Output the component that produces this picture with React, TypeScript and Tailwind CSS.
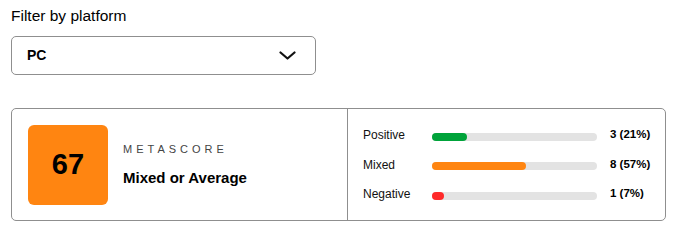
import { ChevronDown } from "lucide-react";

const rows = [
  { label: "Positive", count: 3, pct: 21, color: "bg-[#00a33a]" },
  { label: "Mixed", count: 8, pct: 57, color: "bg-[#ff8511]" },
  { label: "Negative", count: 1, pct: 7, color: "bg-[#ff2a2a]" },
];

export default function App() {
  return (
    <div className="w-[679px] h-[248px] bg-white px-[11px] pt-[7px] text-black font-['Liberation_Sans',Arial,sans-serif]">
      <div className="text-[15.5px] leading-[18px]">Filter by platform</div>

      <button className="mt-[11px] flex h-[39px] w-[305px] items-center justify-between rounded-[5px] border border-[#8f8f8f] pl-[15px] pr-[19px]">
        <span className="text-[14px] font-semibold">PC</span>
        <svg width="17" height="9" viewBox="0 0 17 9" fill="none">
          <path d="M1.5 1.5 L8.5 7.5 L15.5 1.5" stroke="#111" strokeWidth="2.2" strokeLinecap="round" strokeLinejoin="round" />
        </svg>
      </button>

      <div className="mt-[33px] flex h-[113px] w-[655px] rounded-[5px] border border-[#8f8f8f]">
        <div className="flex w-[336px] items-center gap-[15px] border-r border-[#8f8f8f] p-4">
          <div className="flex h-[80px] w-[80px] items-center justify-center rounded-[6px] bg-[#ff8511]">
            <span className="text-[29px] font-bold leading-none">67</span>
          </div>
          <div className="flex flex-col gap-[13px]">
            <span className="text-[11px] leading-[13px] tracking-[4px] text-[#444]">METASCORE</span>
            <span className="text-[15px] font-bold leading-[18px]">Mixed or Average</span>
          </div>
        </div>

        <div className="flex flex-1 flex-col justify-center gap-[9.5px] pl-[15px]">
          {rows.map((r) => (
            <div key={r.label} className="flex h-[20px] items-center">
              <span className="w-[69px] text-[12px] text-[#111]">{r.label}</span>
              <div className="mt-[3px] h-[8px] w-[165px] rounded-full bg-[#e3e3e3]">
                <div className={`h-full rounded-full ${r.color}`} style={{ width: `${Math.max(r.pct, 7)}%` }} />
              </div>
              <span className="ml-[13px] text-[11.5px] font-bold">
                {r.count} ({r.pct}%)
              </span>
            </div>
          ))}
        </div>
      </div>
    </div>
  );
}
